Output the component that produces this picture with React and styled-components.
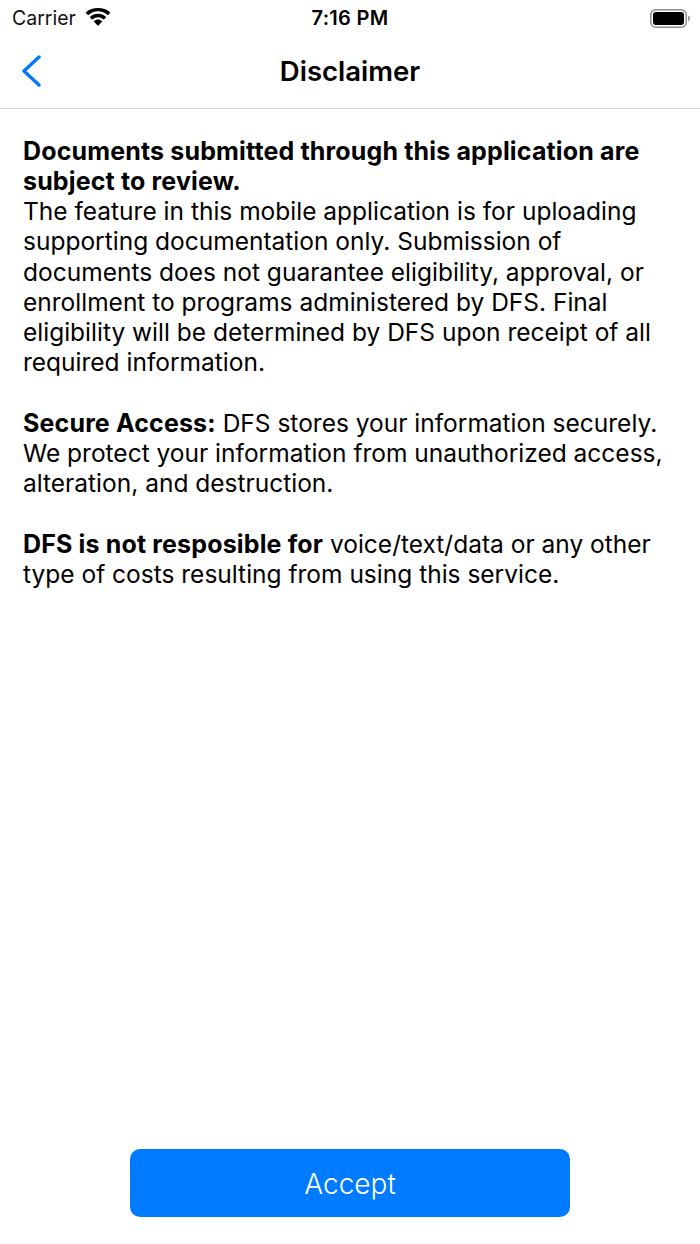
import React from "react";
import styled, { createGlobalStyle } from "styled-components";

const GlobalStyle = createGlobalStyle`
  html, body {
    margin: 0;
    padding: 0;
    background: #ffffff;
  }
  * {
    box-sizing: border-box;
  }
`;

const Screen = styled.div`
  width: 700px;
  height: 1244px;
  display: flex;
  flex-direction: column;
  background: #ffffff;
  color: #000000;
  font-family: Inter, "Noto Sans", sans-serif;
`;

const StatusBar = styled.div`
  height: 36px;
  padding: 0 9px;
  display: grid;
  grid-template-columns: 1fr auto 1fr;
  align-items: center;
`;

const StatusLeft = styled.div`
  padding-left: 3px;
  display: flex;
  align-items: center;
  gap: 9px;
  font-size: 19.5px;
  color: #111111;
`;

const Clock = styled.div`
  font-size: 20px;
  font-weight: 600;
  letter-spacing: 0.3px;
`;

const StatusRight = styled.div`
  display: flex;
  justify-content: flex-end;
`;

const NavBar = styled.header`
  height: 73px;
  padding: 0 22px 2px;
  display: grid;
  grid-template-columns: 1fr auto 1fr;
  align-items: center;
  border-bottom: 1px solid #d6d6d8;
`;

const BackButton = styled.button`
  width: 20px;
  height: 34px;
  padding: 0;
  border: 0;
  background: none;
  display: flex;
`;

const Title = styled.h1`
  margin: 0;
  font-size: 27.5px;
  font-weight: 600;
`;

const Content = styled.main`
  flex: 1;
  padding: 26.5px 20px 0 23px;
  font-size: 24.5px;
  line-height: 30.25px;
`;

const Paragraph = styled.p`
  margin: 0 0 30.25px;
`;

const Strong = styled.strong`
  font-size: 25px;
  font-weight: 700;
  letter-spacing: 0.15px;
`;

const Footer = styled.footer`
  padding-bottom: 27px;
  display: flex;
  justify-content: center;
`;

const AcceptButton = styled.button`
  width: 440px;
  height: 68px;
  padding: 2px 0 0;
  border: 0;
  border-radius: 10px;
  background: #007aff;
  color: #ffffff;
  font-family: inherit;
  font-size: 28px;
  font-weight: 300;
`;

const WifiIcon = () => (
  <svg width="26" height="20" viewBox="0 0 26 20" aria-hidden="true">
    <path
      fill="#000"
      d="M13 3.2c3.7 0 7 1.4 9.5 3.8.2.2.5.2.7 0l1.8-1.9c.2-.2.2-.5 0-.8C22 1.300 17.700 0 13 0S4 1.300 1 4.300c-.2.300-.2.600 0 .8L2.800 7c.2.2.5.2.7 0C6 4.600 9.300 3.200 13 3.200z"
    />
    <path
      fill="#000"
      d="M13 9.300c2 0 3.900.8 5.300 2.100.2.200.5.200.7 0l1.900-1.900c.2-.2.2-.5 0-.8C18.900 6.800 16.100 5.800 13 5.800s-5.900 1-7.900 2.900c-.2.300-.2.600 0 .8L7 11.400c.2.200.5.200.7 0 1.400-1.300 3.300-2.100 5.300-2.100z"
    />
    <path
      fill="#000"
      d="M17 13.800c.2-.2.200-.5 0-.7-1.100-1-2.500-1.600-4-1.600s-2.900.6-4 1.600c-.2.200-.2.500 0 .7l3.600 3.700c.2.200.6.200.8 0z"
    />
  </svg>
);

const BatteryIcon = () => (
  <svg width="41" height="19" viewBox="0 0 41 19" aria-hidden="true">
    <rect x="0.75" y="0.75" width="35.500" height="17.500" rx="5" fill="none" stroke="#8e8e8e" strokeWidth="1.500" />
    <rect x="3" y="3" width="31" height="13" rx="3" fill="#000" />
    <path d="M38 6.500c1.300.4 2 1.500 2 3s-.7 2.600-2 3z" fill="#a0a0a0" />
  </svg>
);

const BackIcon = () => (
  <svg width="20" height="34" viewBox="0 0 20 34" aria-hidden="true">
    <path
      d="M17 3 2 17l15 14"
      fill="none"
      stroke="#007aff"
      strokeWidth="3.400"
      strokeLinecap="round"
      strokeLinejoin="round"
    />
  </svg>
);

export default function App() {
  return (
    <Screen>
      <GlobalStyle />
      <StatusBar>
        <StatusLeft>
          Carrier
          <WifiIcon />
        </StatusLeft>
        <Clock>7:16 PM</Clock>
        <StatusRight>
          <BatteryIcon />
        </StatusRight>
      </StatusBar>

      <NavBar>
        <BackButton aria-label="Back">
          <BackIcon />
        </BackButton>
        <Title>Disclaimer</Title>
      </NavBar>

      <Content>
        <Paragraph>
          <Strong>Documents submitted through this application are subject to review.</Strong>
          <br />
          The feature in this mobile application is for uploading supporting documentation only.
          Submission of documents does not guarantee eligibility, approval, or enrollment to
          programs administered by DFS. Final eligibility will be determined by DFS upon receipt of
          all required information.
        </Paragraph>
        <Paragraph>
          <Strong>Secure Access:</Strong> DFS stores your information securely. We protect your
          information from unauthorized access, alteration, and destruction.
        </Paragraph>
        <Paragraph>
          <Strong>DFS is not resposible for</Strong> voice/text/data or any other type of costs
          resulting from using this service.
        </Paragraph>
      </Content>

      <Footer>
        <AcceptButton>Accept</AcceptButton>
      </Footer>
    </Screen>
  );
}
